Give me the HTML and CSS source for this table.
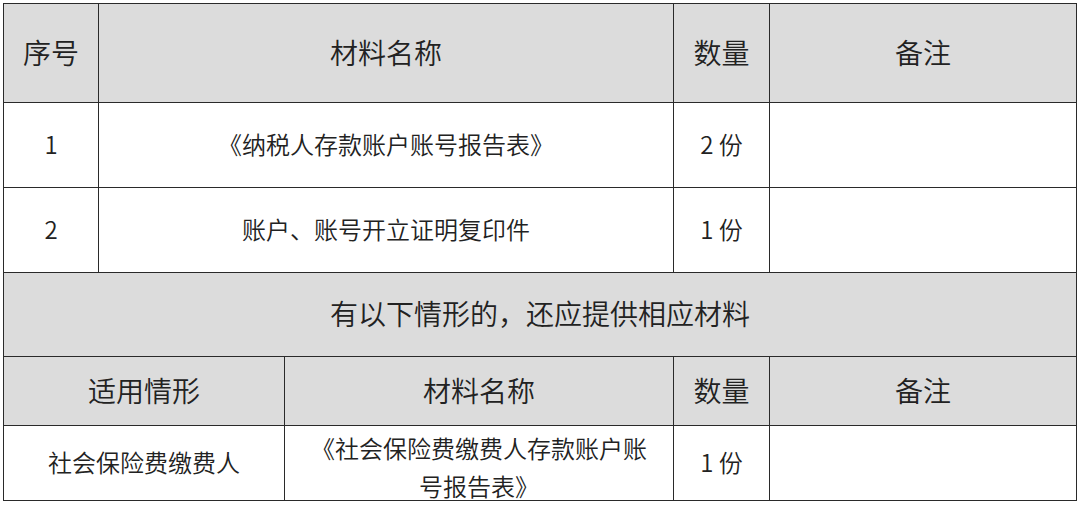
FILE: index.html
```html
<!DOCTYPE html>
<html lang="zh-CN">
<head>
<meta charset="utf-8">
<link rel="stylesheet" href="styles.css">
</head>
<body>
<table class="tbl">
  <colgroup>
    <col class="c1"><col class="c2"><col class="c3"><col class="c4"><col class="c5">
  </colgroup>
  <tr class="r-head head">
    <td>序号</td>
    <td colspan="2">材料名称</td>
    <td>数量</td>
    <td>备注</td>
  </tr>
  <tr class="r-body">
    <td class="num">1</td>
    <td colspan="2">《纳税人存款账户账号报告表》</td>
    <td>2 份</td>
    <td></td>
  </tr>
  <tr class="r-body">
    <td class="num">2</td>
    <td colspan="2">账户、账号开立证明复印件</td>
    <td>1 份</td>
    <td></td>
  </tr>
  <tr class="r-sect head">
    <td colspan="5">有以下情形的，还应提供相应材料</td>
  </tr>
  <tr class="r-sub head">
    <td colspan="2">适用情形</td>
    <td>材料名称</td>
    <td>数量</td>
    <td>备注</td>
  </tr>
  <tr class="r-last">
    <td colspan="2">社会保险费缴费人</td>
    <td class="wrap"><div class="wrap-in">《社会保险费缴费人存款账户账号报告表》</div></td>
    <td>1 份</td>
    <td></td>
  </tr>
</table>
</body>
</html>
```

FILE: styles.css
```css
html, body {
  margin: 0;
  padding: 0;
  background: #ffffff;
}
body {
  padding: 3px 0 0 3px;
  font-family: "Noto Sans CJK SC", "Noto Sans", sans-serif;
  color: #222;
}
.tbl {
  border-collapse: collapse;
  table-layout: fixed;
  width: 1073px;
}
.c1 { width: 95px; }
.c2 { width: 186px; }
.c3 { width: 389px; }
.c4 { width: 96px; }
.c5 { width: 307px; }
.tbl td {
  border: 1px solid #2a2a2a;
  text-align: center;
  vertical-align: middle;
  padding: 0 0 3px;
  font-size: 24px;
  line-height: 36px;
  font-weight: 350;
}
.head td {
  background: #dcdcdc;
  font-size: 28px;
}
.r-head { height: 99px; }
.r-body { height: 85px; }
.r-sect { height: 84px; }
.r-sub { height: 69px; }
.r-last { height: 75px; }
.tbl td.wrap {
  padding: 3px 22px 0;
  vertical-align: top;
}
.wrap-in {
  height: 66px;
  line-height: 38px;
}
```
